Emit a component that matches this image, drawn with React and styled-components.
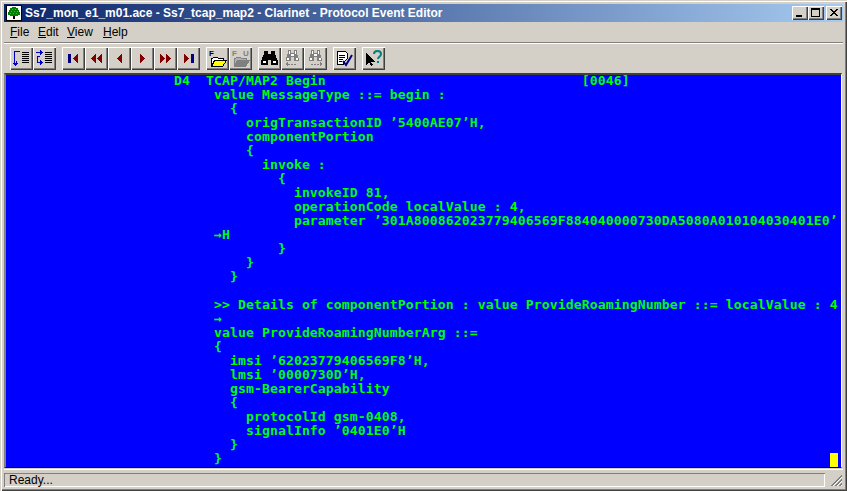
import React from "react";
import styled, { createGlobalStyle, css } from "styled-components";

const GlobalStyle = createGlobalStyle`
  html, body {
    margin: 0;
    padding: 0;
    background: #d4d0c8;
  }
`;

const raised = css`
  box-shadow: inset 1px 1px 0 #fff, inset -1px -1px 0 #404040,
    inset -2px -2px 0 #808080;
`;

const Window = styled.div`
  width: 847px;
  height: 491px;
  box-sizing: border-box;
  padding: 4px;
  display: flex;
  flex-direction: column;
  overflow: hidden;
  background: #d4d0c8;
  font-family: "Liberation Sans", Arial, sans-serif;
  box-shadow: inset 1px 1px 0 #d4d0c8, inset 2px 2px 0 #fff,
    inset -1px -1px 0 #404040, inset -2px -2px 0 #808080;
`;

const TitleBar = styled.div`
  height: 18px;
  flex: none;
  display: flex;
  align-items: center;
  padding: 0 1px 0 2px;
  background: linear-gradient(90deg, #0a246a, #a6caf0);
`;

const TitleText = styled.div`
  flex: 1;
  margin-left: 3px;
  color: #fff;
  font-size: 12px;
  font-weight: bold;
  white-space: nowrap;
`;

const AppIcon = styled.svg`
  width: 16px;
  height: 16px;
  flex: none;
  shape-rendering: crispEdges;
`;

const CaptionButtons = styled.div`
  display: flex;
  align-items: center;
`;

const CaptionButton = styled.div`
  ${raised}
  width: 16px;
  height: 14px;
  margin-left: ${props => (props.$gap ? "2px" : "0")};
  background: #d4d0c8;
  display: flex;
  align-items: center;
  justify-content: center;
`;

const MenuBar = styled.div`
  height: 18px;
  flex: none;
  display: flex;
  align-items: center;
  padding: 1px 0 0 2px;
`;

const MenuItem = styled.span`
  width: ${props => props.$width}px;
  padding-left: 4px;
  box-sizing: border-box;
  font-size: 12px;
  color: #000;
  u {
    text-decoration: underline;
  }
`;

const ToolbarRule = styled.div`
  height: 2px;
  flex: none;
  margin-top: 1px;
  background: linear-gradient(#808080 50%, #fff 50%);
`;

const Toolbar = styled.div`
  height: 29px;
  flex: none;
  display: flex;
  align-items: center;
  padding: 0 0 0 6px;
  box-sizing: border-box;
`;

const ToolGroup = styled.div`
  display: flex;
  margin-right: 6px;
`;

const ToolButton = styled.div`
  ${raised}
  width: 23px;
  height: 23px;
  background: #d4d0c8;
  display: flex;
  align-items: center;
  justify-content: center;
`;

const Icon = styled.svg`
  width: ${props => props.$size || 17}px;
  height: ${props => props.$size || 17}px;
  shape-rendering: crispEdges;
`;

const IconLetter = styled.text`
  font-family: "Liberation Sans", Arial, sans-serif;
  font-size: 8px;
  font-weight: bold;
  fill: ${props => props.$fill};
`;

const Editor = styled.div`
  height: 395px;
  box-sizing: border-box;
  flex: none;
  position: relative;
  margin: 0 1px 0 0;
  background: #0000ff;
  border-top: 2px solid #404040;
  border-left: 2px solid #808080;
  border-bottom: 1px solid #000;
  border-right: 1px solid #fff;
  overflow: hidden;
`;

const Listing = styled.pre`
  margin: -1px 0 0;
  color: #00ff00;
  font-family: "DejaVu Sans Mono", "Liberation Mono", monospace;
  font-weight: bold;
  font-size: 13px;
  letter-spacing: 0.17px;
  line-height: 14px;
`;

const Caret = styled.div`
  position: absolute;
  right: 3px;
  bottom: 0;
  width: 8px;
  height: 14px;
  background: #ffff00;
`;

const StatusBar = styled.div`
  height: 19px;
  flex: none;
  box-sizing: border-box;
  display: flex;
  align-items: flex-end;
  margin-top: 1px;
  padding: 4px 0 1px;
  box-shadow: inset 0 1px 0 #fff;
`;

const StatusPane = styled.div`
  flex: 1;
  height: 14px;
  margin-right: 4px;
  padding-left: 5px;
  font-size: 12px;
  line-height: 14px;
  color: #000;
  box-shadow: inset 1px 1px 0 #808080, inset -1px -1px 0 #fff;
`;

const Grip = styled.svg`
  width: 14px;
  height: 14px;
  flex: none;
`;

const Red = "#800000";
const Navy = "#000080";

// Navigation arrows, all in a 17x17 box
const NavFirst = () => (
  <Icon viewBox="0 0 17 17">
    <rect x="3" y="4" width="3" height="9" fill={Navy} />
    <path d="M13 4v9L8 8.5z" fill={Red} />
  </Icon>
);
const NavPrevFast = () => (
  <Icon viewBox="0 0 17 17">
    <path d="M8 4v9L3 8.5zM14 4v9L9 8.5z" fill={Red} />
  </Icon>
);
const NavPrev = () => (
  <Icon viewBox="0 0 17 17">
    <path d="M11 4v9L6 8.5z" fill={Red} />
  </Icon>
);
const NavNext = () => (
  <Icon viewBox="0 0 17 17">
    <path d="M6 4v9l5-4.5z" fill={Red} />
  </Icon>
);
const NavNextFast = () => (
  <Icon viewBox="0 0 17 17">
    <path d="M3 4v9l5-4.5zM9 4v9l5-4.5z" fill={Red} />
  </Icon>
);
const NavLast = () => (
  <Icon viewBox="0 0 17 17">
    <path d="M4 4v9l5-4.5z" fill={Red} />
    <rect x="11" y="4" width="3" height="9" fill={Navy} />
  </Icon>
);

const Lines = ({ x }) => (
  <path
    d={`M${x} 2.500h7M${x} 4.500h7M${x} 6.500h7M${x} 8.500h7M${x} 10.500h7M${x} 12.500h7`}
    stroke="#000"
    fill="none"
  />
);

const StepInto = () => (
  <Icon viewBox="0 0 17 17">
    <path d="M1 1h6v1H2v11h1v-2h1v2h1v1H4v1H3v1H2v-1H1v-1H0v-1h1z" fill="#0000c0" />
    <Lines x={9} />
  </Icon>
);
const StepOver = () => (
  <Icon viewBox="0 0 17 17">
    <path
      d="M0 2h4V0h1v1h1v1h1v1H6v1H5v1H4V3H0zM2 6h2v1H2v5h2v-2h1v1h1v1h1v1H6v1H5v1H4v-2H1V6z"
      fill="#0000c0"
    />
    <Lines x={9} />
  </Icon>
);

const Folder = ({ disabled }) => {
  const ink = disabled ? "#808080" : "#000";
  return (
    <Icon viewBox="0 0 19 19" $size={19}>
      <IconLetter x="1" y="7" $fill={ink}>F</IconLetter>
      {disabled && <IconLetter x="12" y="7" $fill={ink}>U</IconLetter>}
      <path
        d="M3.500 17.500v-8h1l1-1h4l1 1h5v2"
        fill={disabled ? "#b0b0b0" : "#fff"}
        stroke={ink}
      />
      <path
        d="M3.500 17.500l3-6h12l-4 6z"
        fill={disabled ? "#808080" : "#ffff00"}
        stroke={ink}
      />
    </Icon>
  );
};

const Binoculars = () => (
  <Icon viewBox="0 0 17 17">
    <path d="M3 1h4v3h3V1h4v3l3 7v4H10v-5H7v5H0v-4l3-7z" fill="#000" />
    <rect x="2" y="11" width="3" height="2" fill="#fff" />
    <rect x="12" y="11" width="3" height="2" fill="#fff" />
  </Icon>
);

const FadedBinoculars = ({ dir }) => (
  <Icon viewBox="0 0 17 17">
    <path d="M4 0h3v3h3V0h3v3l2 6v2h-5V7H7v4H2V9l2-6z" fill="#808080" />
    <path d="M5 1h1v3H5zM11 1h1v3h-1zM3 8h2v2H3zM12 8h2v2h-2zM7 4h3v2H7z" fill="#fff" />
    <path d="M4 14h2M7 14h2M10 14h2" stroke="#808080" />
    {dir === "left" ? (
      <path d="M4 12v4L1 14z" fill="#808080" />
    ) : (
      <path d="M13 12v4l3-2z" fill="#808080" />
    )}
  </Icon>
);

const Checklist = () => (
  <Icon viewBox="0 0 17 17">
    <path d="M1.500 1.500h8l2 2v5l-4 4v2h-6z" fill="#fff" stroke="#000" />
    <path d="M3 5h6M3 7h6M3 9h4M3 11h3" stroke="#000" />
    <path
      d="M7 11l3 4 6-10"
      stroke="#000080"
      strokeWidth="2"
      fill="none"
      shapeRendering="auto"
    />
  </Icon>
);

const HelpPointer = () => (
  <Icon viewBox="0 0 17 17">
    <path d="M1 3v12l3-3 2 4 2-1-2-3h4z" fill="#000" />
    <path
      d="M9 4c0-4 7-4 7 0 0 3-3 2.500-3 5"
      stroke="#008080"
      strokeWidth="2"
      fill="none"
      shapeRendering="auto"
    />
    <rect x="12" y="11" width="2" height="2" fill="#008080" />
  </Icon>
);

const listing = `                     D4  TCAP/MAP2 Begin                                [0046]
                          value MessageType ::= begin :
                            {
                              origTransactionID ’5400AE07’H,
                              componentPortion
                              {
                                invoke :
                                  {
                                    invokeID 81,
                                    operationCode localValue : 4,
                                    parameter ’301A800862023779406569F884040000730DA5080A010104030401E0’
                          →H
                                  }
                              }
                            }

                          >> Details of componentPortion : value ProvideRoamingNumber ::= localValue : 4
                          →
                          value ProvideRoamingNumberArg ::=
                          {
                            imsi ’62023779406569F8’H,
                            lmsi ’0000730D’H,
                            gsm-BearerCapability
                            {
                              protocolId gsm-0408,
                              signalInfo ’0401E0’H
                            }
                          }`;

export default function App() {
  return (
    <Window>
      <GlobalStyle />
      <TitleBar>
        <AppIcon viewBox="0 0 16 16">
          <rect width="16" height="16" fill="#000" />
          <rect x="1" y="1" width="14" height="14" fill="#fff" />
          <path
            d="M6 2h4v1h2v2h1v2h1v3h-2v1H9v3H7v-3H4v-1H2V7h1V5h1V3h2z"
            fill="#008000"
          />
          <path
            d="M6 4h1v1H6zM9 4h1v1H9zM5 6h1v1H5zM8 6h1v1H8zM11 6h1v1h-1zM4 8h1v1H4zM7 8h1v1H7zM10 8h1v1h-1z"
            fill="#00e000"
          />
          <rect x="7" y="11" width="2" height="3" fill="#000" />
        </AppIcon>
        <TitleText>
          Ss7_mon_e1_m01.ace - Ss7_tcap_map2 - Clarinet - Protocol Event Editor
        </TitleText>
        <CaptionButtons>
          <CaptionButton>
            <svg width="10" height="10" viewBox="0 0 10 10">
              <rect x="1" y="7" width="6" height="2" fill="#000" />
            </svg>
          </CaptionButton>
          <CaptionButton>
            <svg width="10" height="10" viewBox="0 0 10 10">
              <path d="M0 0h9v9H0zM1 2v6h7V2z" fill="#000" fillRule="evenodd" />
            </svg>
          </CaptionButton>
          <CaptionButton $gap>
            <svg width="10" height="10" viewBox="0 0 10 10">
              <path
                d="M1 1l7 7M2 1l7 7M8 1L1 8M9 1L2 8"
                stroke="#000"
                fill="none"
              />
            </svg>
          </CaptionButton>
        </CaptionButtons>
      </TitleBar>
      <MenuBar>
        <MenuItem $width={28}>
          <u>F</u>ile
        </MenuItem>
        <MenuItem $width={29}>
          <u>E</u>dit
        </MenuItem>
        <MenuItem $width={36}>
          <u>V</u>iew
        </MenuItem>
        <MenuItem $width={40}>
          <u>H</u>elp
        </MenuItem>
      </MenuBar>
      <ToolbarRule />
      <Toolbar>
        <ToolGroup>
          <ToolButton><StepInto /></ToolButton>
          <ToolButton><StepOver /></ToolButton>
        </ToolGroup>
        <ToolGroup>
          <ToolButton><NavFirst /></ToolButton>
          <ToolButton><NavPrevFast /></ToolButton>
          <ToolButton><NavPrev /></ToolButton>
          <ToolButton><NavNext /></ToolButton>
          <ToolButton><NavNextFast /></ToolButton>
          <ToolButton><NavLast /></ToolButton>
        </ToolGroup>
        <ToolGroup>
          <ToolButton><Folder /></ToolButton>
          <ToolButton><Folder disabled /></ToolButton>
        </ToolGroup>
        <ToolGroup>
          <ToolButton><Binoculars /></ToolButton>
          <ToolButton><FadedBinoculars dir="left" /></ToolButton>
          <ToolButton><FadedBinoculars dir="right" /></ToolButton>
        </ToolGroup>
        <ToolGroup>
          <ToolButton><Checklist /></ToolButton>
        </ToolGroup>
        <ToolGroup>
          <ToolButton><HelpPointer /></ToolButton>
        </ToolGroup>
      </Toolbar>
      <Editor>
        <Listing>{listing}</Listing>
        <Caret />
      </Editor>
      <StatusBar>
        <StatusPane>Ready...</StatusPane>
        <Grip viewBox="0 0 14 14">
          <path
            d="M13 2L2 13M13 3L3 13M13 6L6 13M13 7L7 13M13 10L10 13M13 11L11 13"
            stroke="#808080"
          />
          <path d="M13 4L4 13M13 8L8 13M13 12L12 13" stroke="#fff" />
        </Grip>
      </StatusBar>
    </Window>
  );
}
